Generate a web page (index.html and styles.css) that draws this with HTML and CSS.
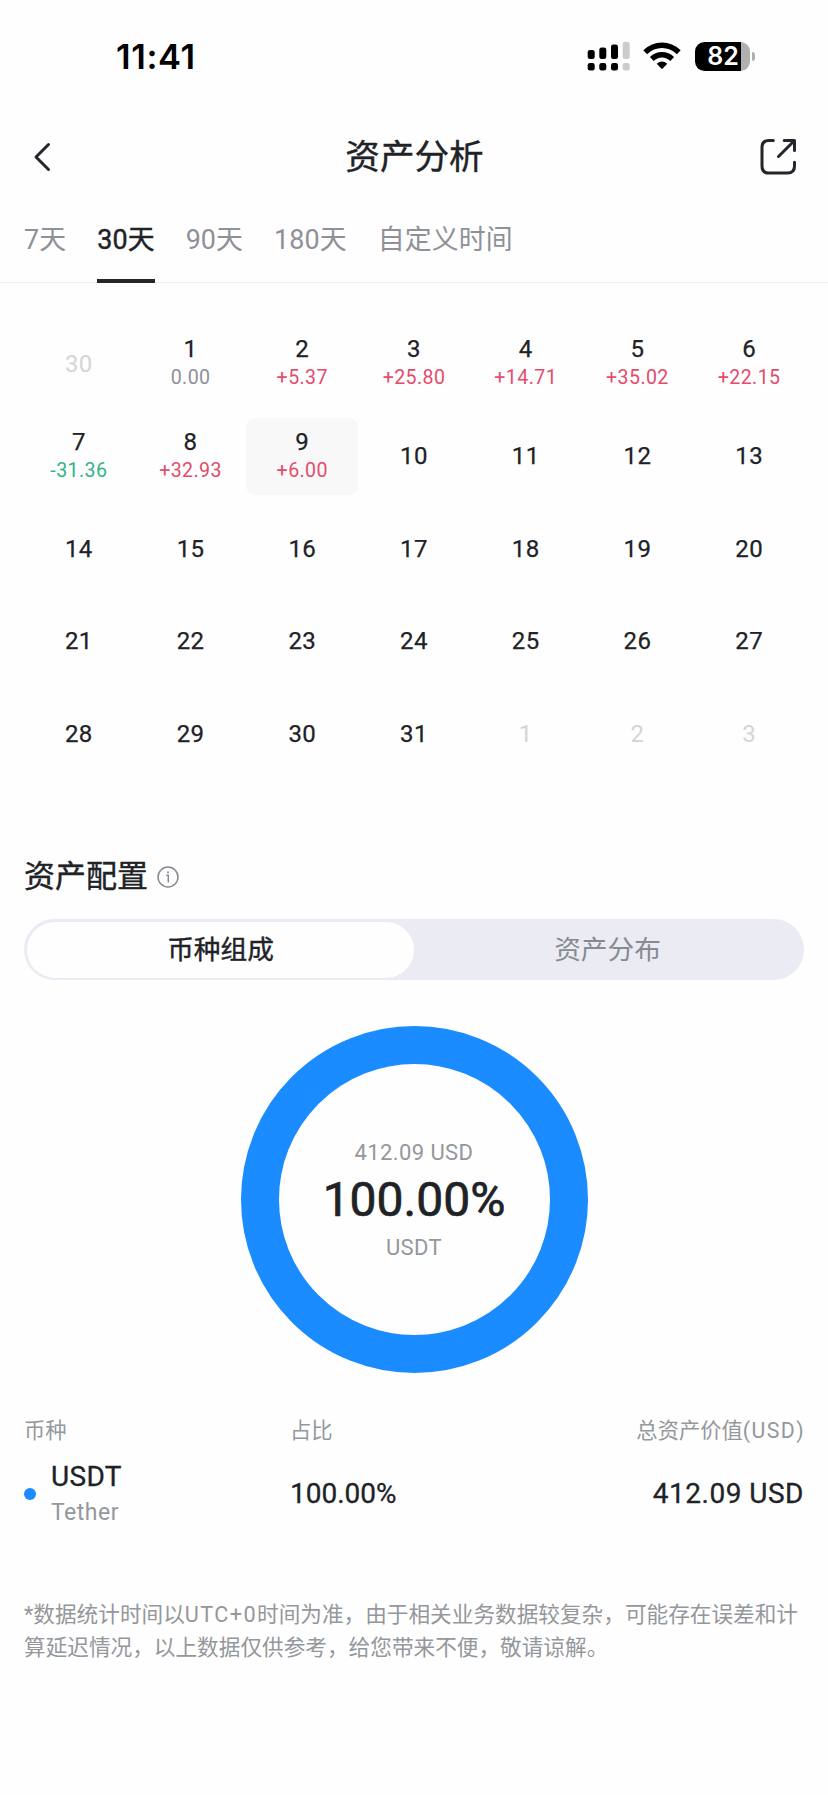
FILE: index.html
```html
<!DOCTYPE html>
<html lang="zh-CN">
<head>
<meta charset="utf-8">
<meta name="viewport" content="width=device-width, initial-scale=1">
<title>资产分析</title>
<link rel="stylesheet" href="styles.css">
</head>
<body>
<div class="statusbar">
  <span class="clock">11:41</span>
  <div class="indicators">
    <svg class="signal" width="43" height="30" viewBox="0 0 43 30">
      <g fill="#000"><rect x="0.7" y="9" width="7" height="9" rx="2.3"/><rect x="12.3" y="6.5" width="7" height="11.5" rx="2.3"/><rect x="24" y="3.5" width="7" height="14.5" rx="2.3"/><rect x="0.7" y="22" width="7" height="7.6" rx="2.3"/><rect x="12.3" y="22" width="7" height="7.6" rx="2.3"/><rect x="24" y="22" width="7" height="7.6" rx="2.3"/></g>
      <g fill="#ccc"><rect x="35.7" y="0.8" width="7" height="17.2" rx="2.3"/><rect x="35.7" y="22" width="7" height="7.6" rx="2.3"/></g>
    </svg>
    <svg class="wifi" width="38" height="28" viewBox="0 0 38 28">
      <g fill="none" stroke="#000" stroke-width="5.4"><path d="M2.2 10.2Q9.5 3.2 19 3.2T35.8 10.2"/><path d="M8.8 17Q13.2 12.7 19 12.7T29.2 17"/></g>
      <path d="M13.7 21.8Q19 17.4 24.3 21.8L19.7 26.6Q19 27.2 18.3 26.6Z"/>
    </svg>
    <div class="battery"><span class="level">82</span></div><i class="nub"></i>
  </div>
</div>
<header class="header">
  <svg class="back" width="20" height="32" viewBox="0 0 20 32"><path d="M15.5 3.5L3 16L15.5 28.5" fill="none" stroke="#24262b" stroke-width="3" stroke-linecap="round" stroke-linejoin="round"/></svg>
  <h1 class="title">资产分析</h1>
  <svg class="share" width="38" height="38" viewBox="0 0 38 38"><path d="M13.3 2.5H9Q2 2.5 2 9.5V28Q2 35 9 35H27.5Q34.5 35 34.5 28V24.2M24.2 2.5H34.5V12.5M34 3L18.5 18.5" fill="none" stroke="#24262b" stroke-width="3" stroke-linecap="round" stroke-linejoin="round"/></svg>
</header>
<nav class="tabs">
  <a class="tab">7天</a><a class="tab active">30天</a><a class="tab">90天</a><a class="tab">180天</a><a class="tab">自定义时间</a>
</nav>
<section class="calendar">
  <div class="day muted">30</div>
  <div class="day">1<span class="pnl">0.00</span></div>
  <div class="day">2<span class="pnl up">+5.37</span></div>
  <div class="day">3<span class="pnl up">+25.80</span></div>
  <div class="day">4<span class="pnl up">+14.71</span></div>
  <div class="day">5<span class="pnl up">+35.02</span></div>
  <div class="day">6<span class="pnl up">+22.15</span></div>
  <div class="day">7<span class="pnl down">-31.36</span></div>
  <div class="day">8<span class="pnl up">+32.93</span></div>
  <div class="day selected">9<span class="pnl up">+6.00</span></div>
  <div class="day">10</div><div class="day">11</div><div class="day">12</div><div class="day">13</div>
  <div class="day">14</div><div class="day">15</div><div class="day">16</div><div class="day">17</div><div class="day">18</div><div class="day">19</div><div class="day">20</div>
  <div class="day">21</div><div class="day">22</div><div class="day">23</div><div class="day">24</div><div class="day">25</div><div class="day">26</div><div class="day">27</div>
  <div class="day">28</div><div class="day">29</div><div class="day">30</div><div class="day">31</div><div class="day muted">1</div><div class="day muted">2</div><div class="day muted">3</div>
</section>
<section class="allocation">
  <div class="heading">
    <h2 class="subtitle">资产配置</h2>
    <svg width="22" height="22" viewBox="0 0 22 22"><circle cx="11" cy="11" r="10" fill="none" stroke="#868a91" stroke-width="1.5"/><path d="M9.3 9.3H11.3V16.6" fill="none" stroke="#868a91" stroke-width="1.5"/><circle cx="11" cy="6.2" r="1" fill="#868a91"/></svg>
  </div>
  <div class="segments"><div class="segment on">币种组成</div><div class="segment">资产分布</div></div>
  <div class="donut">
    <span class="donut-note">412.09 USD</span>
    <strong class="donut-value">100.00%</strong>
    <span class="donut-note">USDT</span>
  </div>
  <div class="row labels"><span>币种</span><span>占比</span><span class="end">总资产价值<span class="latin">(USD)</span></span></div>
  <div class="row holding">
    <div class="coin"><i class="dot"></i><div><div class="symbol">USDT</div><div class="name">Tether</div></div></div>
    <span>100.00%</span><span class="amount">412.09 USD</span>
  </div>
  <p class="note">*数据统计时间以<span class="latin">UTC+0</span>时间为准，由于相关业务数据较复杂，可能存在误差和计算延迟情况，以上数据仅供参考，给您带来不便，敬请谅解。</p>
</section>
</body>
</html>
```
FILE: styles.css
```css
* { box-sizing: border-box; }
body { margin: 0; min-height: 1795px; background: #fefefe; color: #202226; font-family: Roboto, "Noto Sans CJK SC", sans-serif; }
h1, h2, p { margin: 0; }
svg { display: block; flex: none; }

.statusbar { height: 112px; padding: 0 73px 0 116px; display: flex; justify-content: space-between; align-items: center; color: #000; }
.clock { font: 600 34.5px/40px Inter, sans-serif; letter-spacing: .6px; padding-top: 1px; }
.indicators { display: flex; align-items: center; }
.wifi { margin-left: 13px; }
.battery { width: 55px; height: 29px; margin-left: 14px; border-radius: 9.5px; background: linear-gradient(90deg, #000 46px, #b0b0b0 46px); }
.level { display: block; width: 56px; text-align: center; color: #fff; font: 600 25px/29px Inter, sans-serif; }
.nub { width: 3px; height: 9px; margin-left: 2px; border-radius: 0 4px 4px 0; background: #b0b0b0; }

.header { height: 90px; padding: 0 30px 0 33px; display: grid; grid-template-columns: 36px 1fr 38px; align-items: center; }
.title { font-size: 34.6px; line-height: 44px; text-align: center; }
.title, .subtitle, .tab.active, .segment.on { font-weight: 400; -webkit-text-stroke: .4px currentColor; }

.tabs { height: 81px; padding: 0 24px; display: flex; gap: 31px; border-bottom: 1px solid #f0f0f2; }
.tab { height: 81px; padding-top: 18px; font-size: 26.9px; line-height: 40px; color: #8e9197; letter-spacing: .1px; white-space: nowrap; }
.tab.active { color: #202226; border-bottom: 4px solid #24262a; }

.calendar { padding: 42px 23px 0 23px; display: grid; grid-template-columns: repeat(7, 1fr); grid-auto-rows: 77.5px; row-gap: 15px; }
.day { display: flex; flex-direction: column; align-items: center; justify-content: center; border-radius: 9px; font-size: 24px; line-height: 28px; letter-spacing: .4px; -webkit-text-stroke: .25px currentColor; }
.day.selected { background: #f8f8f9; }
.day.muted { color: #d3d5d8; -webkit-text-stroke: 0; }
.pnl { padding-top: 1px; font-size: 19.6px; color: #8e9197; letter-spacing: .4px; -webkit-text-stroke: 0; }
.up { color: #e44c6c; }
.down { color: #31b583; }

.allocation { padding: 0 24px; }
.heading { margin-top: 82px; height: 44px; display: flex; align-items: center; gap: 9px; }
.subtitle { font-size: 31px; line-height: 44px; }
.segments { height: 61px; margin-top: 20px; padding: 3px; display: grid; grid-template-columns: 1fr 1fr; border-radius: 31px; background: #ebecf3; }
.segment { border-radius: 28px; text-align: center; font-size: 26.7px; line-height: 56px; color: #868a92; }
.segment.on { background: #fefefe; color: #202226; }
.donut { width: 347px; height: 347px; padding-top: 2px; margin: 46px auto 0; border: 38.5px solid #1a8cff; border-radius: 50%; display: flex; flex-direction: column; align-items: center; justify-content: center; }
.donut-note { font-size: 22px; line-height: 28px; color: #94979c; letter-spacing: .4px; }
.donut-value { margin: 5px 0 6px; font-size: 48px; line-height: 56px; font-weight: 400; -webkit-text-stroke: .7px currentColor; }
.row { display: grid; grid-template-columns: 266px 1fr auto; align-items: center; white-space: nowrap; }
.labels { margin-top: 42px; height: 32px; font-size: 21.3px; line-height: 32px; color: #94979c; }
.latin { letter-spacing: 1.4px; }
.labels .latin { margin-right: -1px; }
.holding { height: 94px; font-size: 28px; line-height: 36px; -webkit-text-stroke: .3px currentColor; }
.amount { letter-spacing: .5px; }
.coin { display: flex; align-items: center; gap: 15px; }
.dot { width: 12px; height: 12px; border-radius: 50%; background: #1a8cff; }
.symbol { line-height: 38px; letter-spacing: .3px; }
.name { font-size: 23px; line-height: 34px; letter-spacing: .5px; color: #94979c; -webkit-text-stroke: 0; }
.note { margin-top: 57px; font-size: 21.65px; line-height: 33px; color: #94979c; }
```
